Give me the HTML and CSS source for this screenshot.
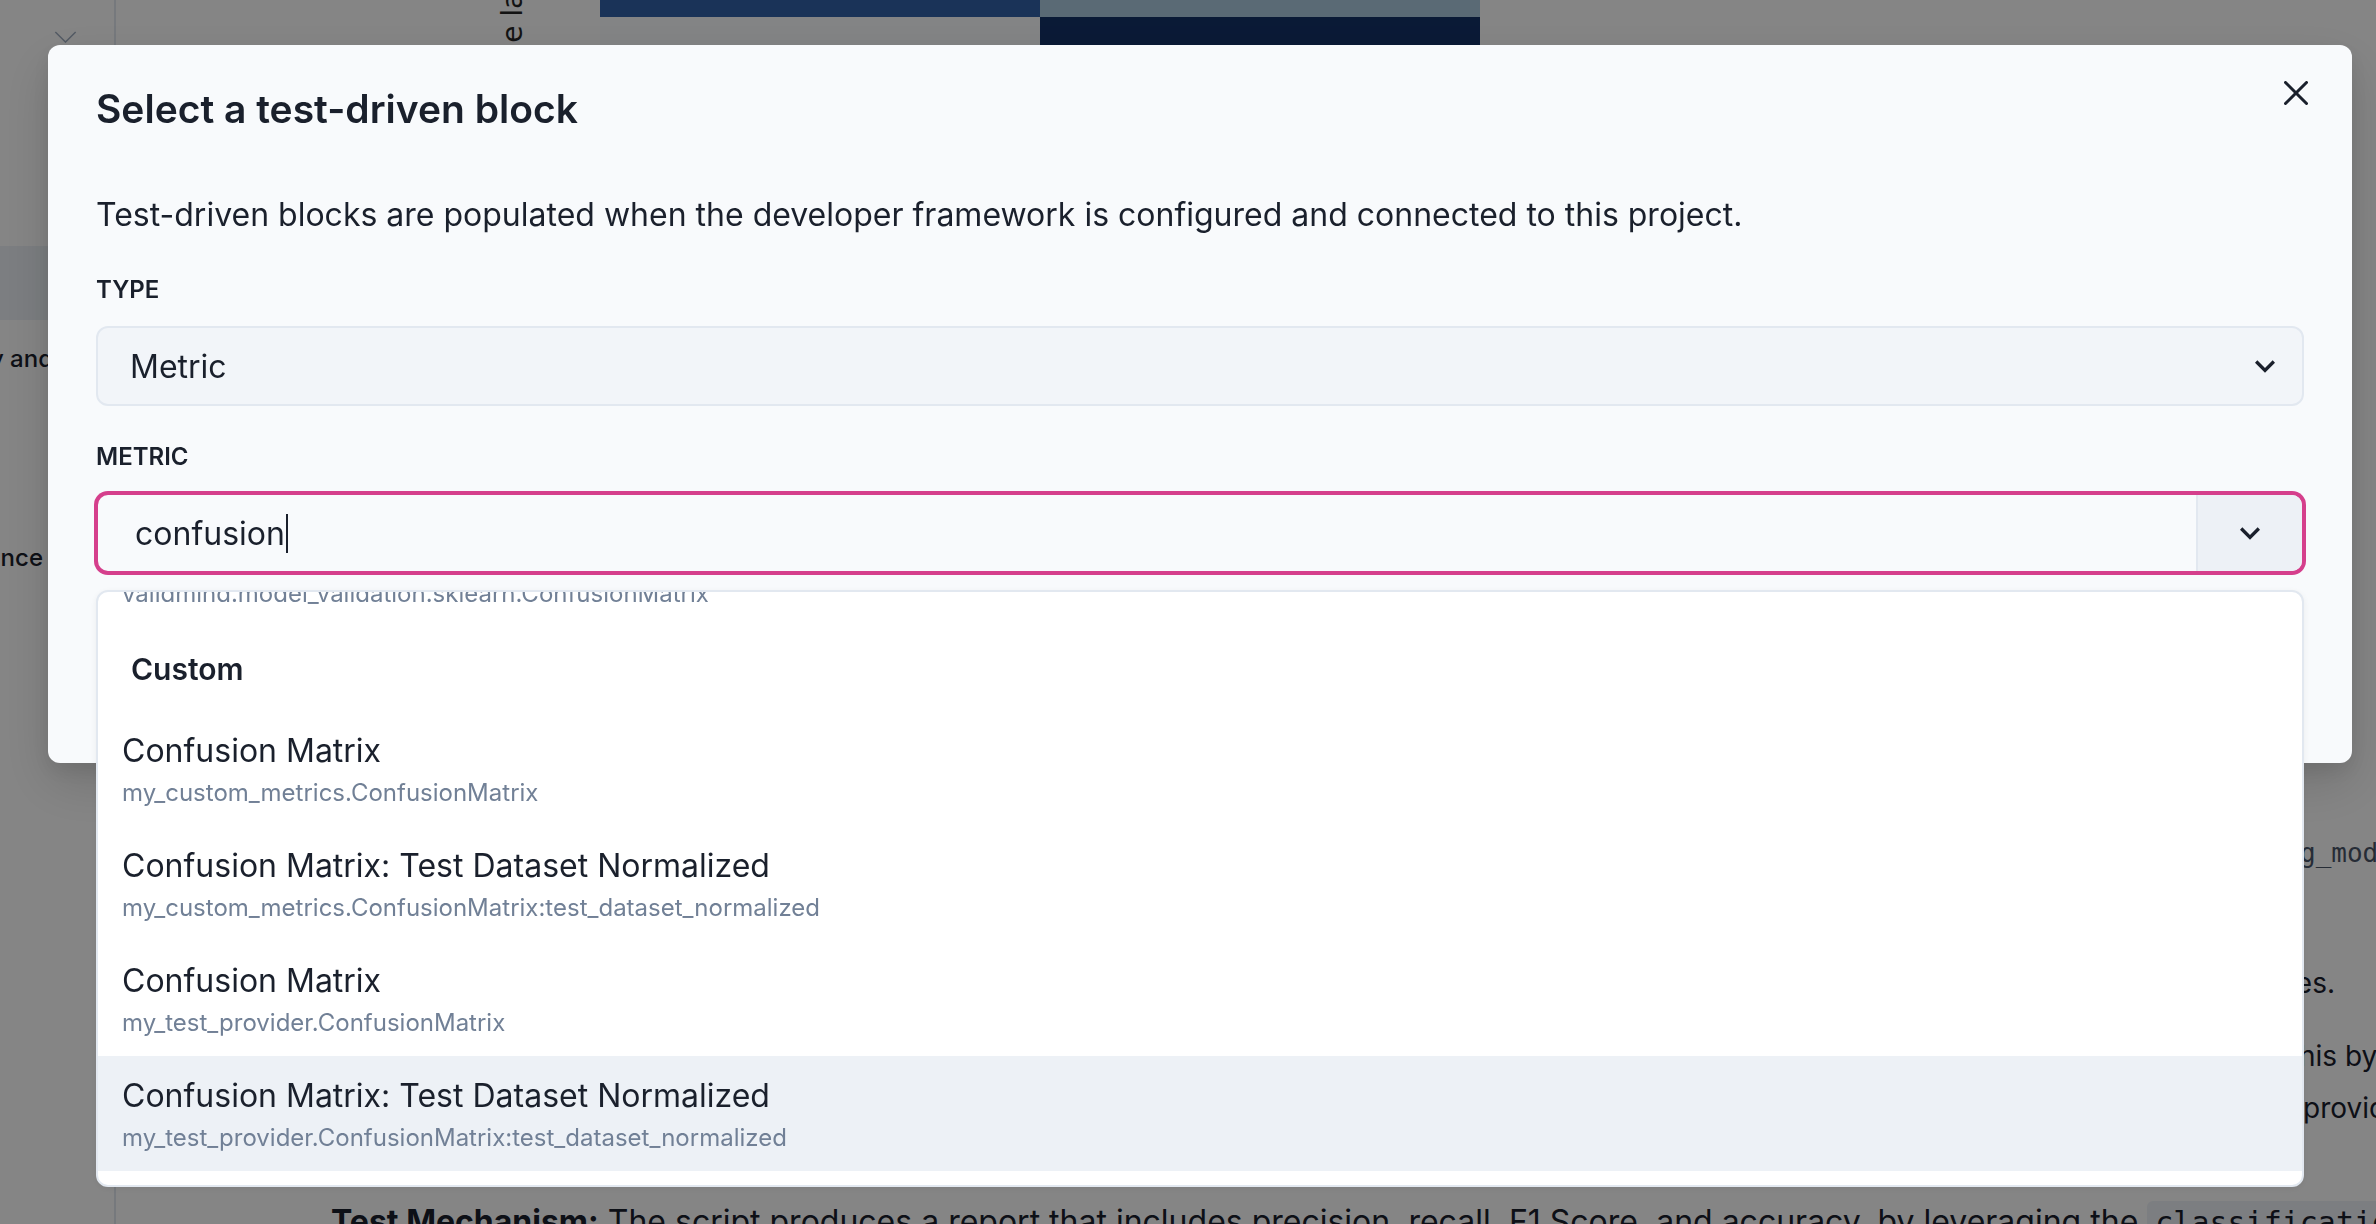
FILE: index.html
```html
<!DOCTYPE html>
<html lang="en">
<head>
<meta charset="utf-8">
<title>Select a test-driven block</title>
<link rel="stylesheet" href="styles.css">
</head>
<body>
<div class="app">
  <aside class="sidebar">
    <div class="sb-top">
      <svg class="sb-chevron" viewBox="0 0 24 13" width="24" height="13" aria-hidden="true"><path d="M1 1 L12 12 L23 1" fill="none" stroke="#a0aec0" stroke-width="1.6"/></svg>
    </div>
    <div class="sb-band"></div>
    <div class="sb-item sb-item-1"><span>Data Quality and</span></div>
    <div class="sb-item sb-item-2"><span>Model Performance</span></div>
  </aside>
  <main class="main">
    <div class="chart">
      <div class="ylabel">True label</div>
      <div class="heatmap">
        <div class="cell c00"></div>
        <div class="cell c01"></div>
        <div class="cell c10"></div>
        <div class="cell c11"></div>
      </div>
    </div>
    <div class="prose">
      <div class="line l1"><span class="pre mono">vm.init_model(model, input_id="training_model") and training_model wraps trainin</span><span class="post mono">g_model</span></div>
      <div class="line l2"><span class="pre">of how well the classification model distinguishes between the different classes.</span></div>
      <div class="line l3"><span class="pre">Test Purpose: The confusion matrix summarises model predictions. The test achieves t</span><span class="post">his by providing a detailed view</span></div>
      <div class="line l4"><span class="pre">comparing the predicted labels against the true labels and&nbsp;</span><span class="post">providing insight</span></div>
      <div class="line l5"><b>Test Mechanism:</b> The script produces a report that includes precision, recall, F1 Score, and accuracy, by leveraging the <code class="code">classification_report</code> function</div>
    </div>
  </main>
</div>

<div class="overlay"></div>

<div class="modal-layer">
  <section class="modal" role="dialog" aria-labelledby="modal-title">
    <button class="close" type="button" aria-label="Close">
      <svg viewBox="0 0 24 24" aria-hidden="true"><path fill="#1a202c" d="M.439,21.44a1.5,1.5,0,0,0,2.122,2.121L11.823,14.3a.25.25,0,0,1,.354,0l9.262,9.263a1.5,1.5,0,1,0,2.122-2.121L14.3,12.177a.25.25,0,0,1,0-.354l9.263-9.262A1.5,1.5,0,0,0,21.439.44L12.177,9.7a.25.25,0,0,1-.354,0L2.561.44A1.5,1.5,0,0,0,.439,2.561L9.7,11.823a.25.25,0,0,1,0,.354Z"/></svg>
    </button>
    <h2 class="modal-title" id="modal-title">Select a test-driven block</h2>
    <p class="modal-desc">Test-driven blocks are populated when the developer framework is configured and connected to this project.</p>

    <div class="field">
      <label class="field-label">TYPE</label>
      <div class="select">
        <span>Metric</span>
        <svg class="chev" viewBox="0 0 24 24" aria-hidden="true"><path fill="#1a202c" d="M16.59 8.59L12 13.17 7.41 8.59 6 10l6 6 6-6z"/></svg>
      </div>
    </div>

    <div class="field">
      <label class="field-label">METRIC</label>
      <div class="combo">
        <div class="combo-value"><span class="typed">confusion</span><span class="caret"></span></div>
        <div class="combo-addon">
          <svg class="chev" viewBox="0 0 24 24" aria-hidden="true"><path fill="#1a202c" d="M16.59 8.59L12 13.17 7.41 8.59 6 10l6 6 6-6z"/></svg>
        </div>
        <div class="menu">
          <div class="menu-inner">
            <div class="option">
              <div class="opt-title">Confusion Matrix</div>
              <div class="opt-sub">validmind.model_validation.sklearn.ConfusionMatrix</div>
            </div>
            <div class="group-heading">Custom</div>
            <div class="option">
              <div class="opt-title">Confusion Matrix</div>
              <div class="opt-sub">my_custom_metrics.ConfusionMatrix</div>
            </div>
            <div class="option">
              <div class="opt-title">Confusion Matrix: Test Dataset Normalized</div>
              <div class="opt-sub">my_custom_metrics.ConfusionMatrix:test_dataset_normalized</div>
            </div>
            <div class="option">
              <div class="opt-title">Confusion Matrix</div>
              <div class="opt-sub">my_test_provider.ConfusionMatrix</div>
            </div>
            <div class="option is-focused">
              <div class="opt-title">Confusion Matrix: Test Dataset Normalized</div>
              <div class="opt-sub">my_test_provider.ConfusionMatrix:test_dataset_normalized</div>
            </div>
          </div>
        </div>
      </div>
    </div>
  </section>
</div>
</body>
</html>
```

FILE: styles.css
```css
* { box-sizing: border-box; }

html, body {
  margin: 0;
  padding: 0;
}

body {
  width: 2376px;
  height: 1224px;
  overflow: hidden;
  background: #ffffff;
  font-family: Inter, "Noto Sans", "Liberation Sans", sans-serif;
  color: #1a202c;
}

/* ---------- background page ---------- */
.app {
  display: flex;
  height: 1224px;
  overflow: hidden;
}

.sidebar {
  flex: none;
  width: 116px;
  border-right: 2px solid #e2e8f0;
  overflow: hidden;
}

.sb-top {
  height: 246px;
  padding: 31px 0 0 54px;
}

.sb-chevron {
  display: block;
  width: 23px;
  height: 12px;
}

.sb-band {
  height: 74px;
  background: #edf2f7;
}

.sb-item {
  display: flex;
  justify-content: flex-end;
  overflow: hidden;
  white-space: nowrap;
  font-size: 24px;
  line-height: 36px;
  font-weight: 500;
  color: #1a202c;
}

.sb-item-1 { width: 53px; margin-top: 21px; }
.sb-item-2 { width: 43px; margin-top: 163px; }

.main {
  flex: 1;
  min-width: 0;
  display: flex;
  flex-direction: column;
}

.chart {
  display: flex;
  align-items: center;
  height: 880px;
  margin-top: -423px;
  margin-left: 380px;
}

.ylabel {
  writing-mode: vertical-rl;
  transform: rotate(180deg);
  font-family: "DejaVu Sans", sans-serif;
  font-size: 28px;
  line-height: 34px;
  white-space: nowrap;
  color: #262626;
  margin-right: 70px;
}

.heatmap {
  display: grid;
  grid-template-columns: 440px 440px;
  grid-template-rows: 440px 440px;
}

.c00 { background: #3262a9; }
.c01 { background: #adcce1; }
.c10 { background: #fbfdff; }
.c11 { background: #153268; }

.prose {
  padding-left: 215px;
  font-size: 28px;
  line-height: 52px;
  color: #1a202c;
}

.line {
  display: flex;
  white-space: nowrap;
}

.line .pre {
  flex: none;
  display: flex;
  justify-content: flex-end;
  overflow: hidden;
}

.line .post { flex: none; }

.mono {
  font-family: "DejaVu Sans Mono", "Liberation Mono", monospace;
  font-size: 26px;
  color: #4a5568;
}

.l1 { margin-top: 370px; }
.l1 .pre { width: 1969px; }
.l2 { margin-top: 78px; }
.l2 .pre { width: 2004px; }
.l3 { margin-top: 21px; }
.l3 .pre { width: 1968px; }
.l4 .pre { width: 1972px; }
.l5 {
  margin-top: 62px;
  display: block;
  font-size: 32px;
}
.l5 b { font-weight: 700; }

.code {
  font-family: "DejaVu Sans Mono", "Liberation Mono", monospace;
  font-size: 30px;
  background: #edf2f7;
  padding: 4px 8px;
  border-radius: 6px;
}

/* ---------- overlay + modal ---------- */
.overlay {
  position: fixed;
  inset: 0;
  background: rgba(0, 0, 0, 0.48);
}

.modal-layer {
  position: fixed;
  inset: 0;
  padding: 45px 24px 0 48px;
}

.modal {
  position: relative;
  width: 2304px;
  height: 718px;
  background: #f8fafc;
  border-radius: 12px;
  box-shadow: 0 20px 50px rgba(0, 0, 0, 0.15), 0 8px 20px rgba(0, 0, 0, 0.08);
  padding: 34px 48px 0;
}

.close {
  position: absolute;
  top: 16px;
  right: 24px;
  width: 64px;
  height: 64px;
  display: flex;
  align-items: center;
  justify-content: center;
  padding: 0;
  border: 0;
  background: transparent;
}

.close svg {
  width: 24px;
  height: 24px;
  display: block;
}

.modal-title {
  margin: 0;
  font-size: 39px;
  line-height: 60px;
  font-weight: 600;
  color: #1a202c;
}

.modal-desc {
  margin: 52px 0 0;
  font-size: 32px;
  line-height: 48px;
  color: #1a202c;
}

.field { margin-top: 33px; }

.field-label {
  display: block;
  font-size: 24px;
  line-height: 36px;
  font-weight: 600;
  margin-bottom: 18px;
  color: #1a202c;
}

.select {
  height: 80px;
  border: 2px solid #e2e8f0;
  border-radius: 12px;
  background: #f2f5f9;
  display: flex;
  align-items: center;
  justify-content: space-between;
  padding: 0 17px 0 32px;
  font-size: 32px;
  color: #1a202c;
}

.chev {
  width: 40px;
  height: 40px;
  display: block;
  flex: none;
}

.combo {
  position: relative;
  height: 80px;
  display: flex;
  border: 2px solid #d53f8c;
  box-shadow: 0 0 0 2px #d53f8c;
  border-radius: 12px;
  background: #f8fafc;
}

.combo-value {
  flex: 1;
  display: flex;
  align-items: center;
  padding-left: 37px;
  font-size: 32px;
  color: #1a202c;
}

.caret {
  display: inline-block;
  width: 2px;
  height: 39px;
  background: #1a202c;
  margin-left: 1px;
}

.combo-addon {
  flex: none;
  width: 106px;
  display: flex;
  align-items: center;
  justify-content: center;
  background: #edf1f6;
  border-left: 2px solid #e2e8f0;
  border-radius: 0 10px 10px 0;
}

.menu {
  position: absolute;
  top: calc(100% + 19px);
  left: -2px;
  right: -2px;
  height: 597px;
  background: #ffffff;
  border: 2px solid #e2e8f0;
  border-radius: 12px;
  box-shadow: 0 2px 6px rgba(0, 0, 0, 0.06);
  overflow: hidden;
  z-index: 2;
}

.menu-inner {
  margin-top: -80px;
  padding-bottom: 15px;
}

.option {
  padding: 16px 24px 15px;
}

.option.is-focused { background: #edf1f6; }

.opt-title {
  font-size: 32px;
  line-height: 48px;
  color: #1a202c;
  white-space: nowrap;
}

.opt-sub {
  font-size: 24px;
  line-height: 36px;
  color: #718096;
  white-space: nowrap;
}

.group-heading {
  padding: 18px 33px;
  font-size: 30px;
  line-height: 48px;
  font-weight: 600;
  color: #1a202c;
}
```
